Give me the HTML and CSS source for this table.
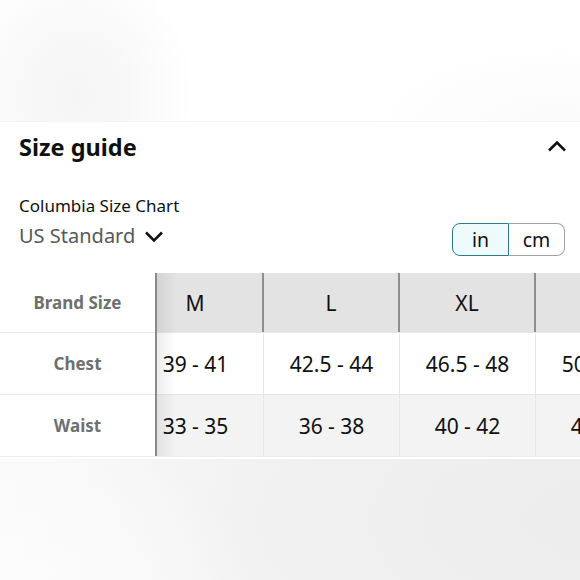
FILE: index.html
```html
<!DOCTYPE html>
<html lang="en">
<head>
<meta charset="utf-8">
<title>Size guide</title>
<link rel="stylesheet" href="styles.css">
</head>
<body>
<div class="backdrop-top"></div>
<section class="panel">
  <header class="panel-head">
    <h2 class="title">Size guide</h2>
    <svg class="chev-up" width="20" height="12" viewBox="0 0 20 12"><path d="M2 10.5 L10 2.5 L18 10.5" fill="none" stroke="#111" stroke-width="2.6"/></svg>
  </header>
  <div class="options">
    <div class="chart-info">
      <div class="chart-name">Columbia Size Chart</div>
      <div class="standard">US Standard
        <svg class="chev-down" width="20" height="12" viewBox="0 0 20 12"><path d="M2 1.5 L10 9.5 L18 1.5" fill="none" stroke="#111" stroke-width="2.6"/></svg>
      </div>
    </div>
    <div class="toggle">
      <span class="seg seg-on">in</span><span class="seg seg-off">cm</span>
    </div>
  </div>
  <div class="table">
    <div class="labels">
      <div class="lcell lhead">Brand Size</div>
      <div class="lcell">Chest</div>
      <div class="lcell">Waist</div>
    </div>
    <div class="data">
      <div class="data-inner">
        <div class="row row-head">
          <div class="cell">M</div><div class="cell">L</div><div class="cell">XL</div><div class="cell">XXL</div>
        </div>
        <div class="row row-white">
          <div class="cell">39 - 41</div><div class="cell">42.5 - 44</div><div class="cell">46.5 - 48</div><div class="cell">50 - 52.5</div>
        </div>
        <div class="row row-grey">
          <div class="cell">33 - 35</div><div class="cell">36 - 38</div><div class="cell">40 - 42</div><div class="cell">44 - 46</div>
        </div>
      </div>
    </div>
  </div>
</section>
<div class="backdrop-bottom"></div>
</body>
</html>
```
FILE: styles.css
```css
html, body {
  margin: 0;
  padding: 0;
}
body {
  width: 580px;
  height: 580px;
  overflow: hidden;
  display: flex;
  flex-direction: column;
  font-family: "Noto Sans", "Open Sans", sans-serif;
  color: #0f1111;
  background: #ffffff;
}
.backdrop-top {
  height: 121px;
  flex: none;
  background:
    radial-gradient(ellipse 120px 140px at 75px 95px, #f5f5f5 0%, #f8f8f8 45%, rgba(255,255,255,0) 100%),
    radial-gradient(ellipse 200px 90px at 560px 130px, #fafafb 0%, rgba(255,255,255,0) 100%),
    #ffffff;
}
.panel {
  background: #ffffff;
  flex: none;
  border-top: 1px solid #f4f4f4;
}
.panel-head {
  height: 49px;
  display: flex;
  align-items: center;
  justify-content: space-between;
  padding: 0 13px 0 19px;
}
.title {
  margin: 0;
  font-size: 23.5px;
  font-weight: 700;
  color: #0f1111;
}
.chev-up {
  display: block;
  margin-top: -2px;
}
.options {
  display: flex;
  justify-content: space-between;
  align-items: flex-end;
  padding: 25px 15px 0 19px;
}
.chart-info {
  padding-bottom: 8px;
}
.chart-name {
  font-size: 17px;
  line-height: 20px;
  color: #0f1111;
}
.standard {
  margin-top: 8px;
  font-size: 20px;
  line-height: 24px;
  color: #565959;
  display: flex;
  align-items: center;
  gap: 9px;
}
.chev-down {
  display: block;
  margin-top: 1px;
}
.toggle {
  display: flex;
  height: 33px;
}
.seg {
  display: flex;
  align-items: center;
  justify-content: center;
  font-size: 19.5px;
  color: #0f1111;
  box-sizing: border-box;
}
.seg-on {
  width: 57px;
  background: #edfbfd;
  border: 1.5px solid #2c7d8c;
  border-radius: 8px 0 0 8px;
}
.seg-off {
  width: 56px;
  background: #ffffff;
  border: 1.5px solid #a2a2a2;
  border-left: none;
  border-radius: 0 8px 8px 0;
}
.table {
  margin-top: 17px;
  display: flex;
  border-bottom: 1px solid #ededed;
}
.labels {
  width: 155px;
  flex: none;
  border-right: 2px solid #8a8a8a;
  position: relative;
  z-index: 1;
  background: #ffffff;
}
.labels::after {
  content: "";
  position: absolute;
  top: 0;
  bottom: 0;
  right: -22px;
  width: 20px;
  background: linear-gradient(to right, rgba(0,0,0,0.07), rgba(0,0,0,0));
}
.lcell {
  height: 61px;
  display: flex;
  align-items: center;
  justify-content: center;
  font-size: 17px;
  font-weight: 700;
  color: #6f6f6f;
  border-bottom: 1px solid #e7e7e7;
}
.lcell.lhead {
  height: 59px;
}
.lcell:last-child {
  border-bottom: none;
}
.data {
  flex: 1;
  overflow: hidden;
}
.data-inner {
  margin-left: -29px;
  width: 700px;
}
.row {
  display: flex;
  height: 61px;
  border-bottom: 1px solid #e7e7e7;
}
.row:last-child {
  border-bottom: none;
}
.row-head {
  height: 59px;
  background: #e3e3e3;
}
.row-white {
  background: #ffffff;
}
.row-grey {
  background: #f3f3f3;
}
.cell {
  width: 136px;
  flex: none;
  box-sizing: border-box;
  display: flex;
  align-items: center;
  justify-content: center;
  font-size: 21px;
  color: #0f1111;
  border-right: 1px solid #e6e6e6;
}
.row-head .cell {
  border-right: 2px solid #8e8e8e;
}
.backdrop-bottom {
  flex: 1;
  border-top: 2px solid #ffffff;
  background:
    radial-gradient(ellipse 420px 200px at 600px 60px, #ececec 0%, rgba(240,240,240,0) 100%),
    radial-gradient(ellipse 260px 160px at 0px 130px, #fcfcfc 0%, rgba(250,250,250,0) 100%),
    linear-gradient(to right, #fafafa 0%, #f3f3f3 40%, #f1f1f1 100%);
}
```
